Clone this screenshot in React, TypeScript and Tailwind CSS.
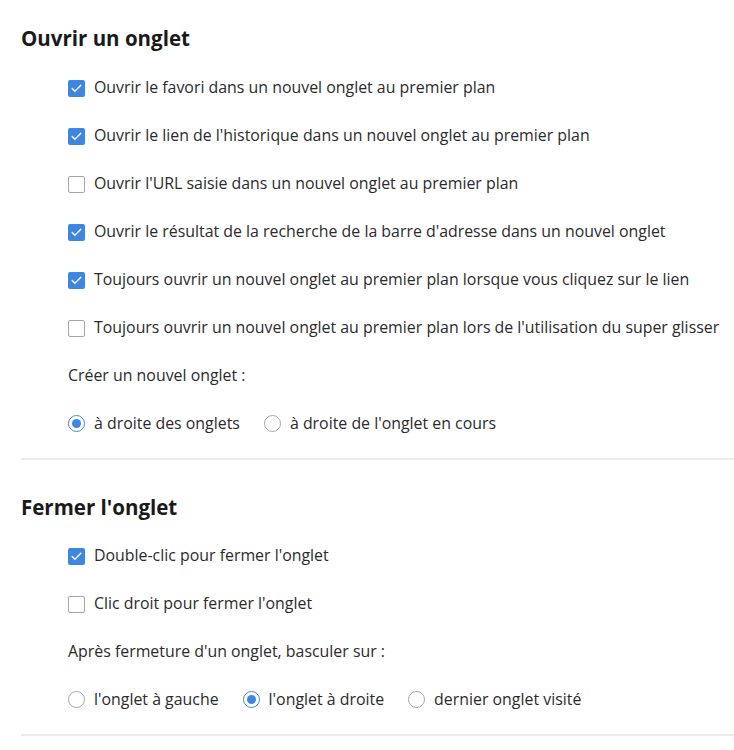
import { Check } from "lucide-react";

type Opt = { label: string; checked: boolean };

const openOptions: Opt[] = [
  { label: "Ouvrir le favori dans un nouvel onglet au premier plan", checked: true },
  { label: "Ouvrir le lien de l'historique dans un nouvel onglet au premier plan", checked: true },
  { label: "Ouvrir l'URL saisie dans un nouvel onglet au premier plan", checked: false },
  { label: "Ouvrir le résultat de la recherche de la barre d'adresse dans un nouvel onglet", checked: true },
  { label: "Toujours ouvrir un nouvel onglet au premier plan lorsque vous cliquez sur le lien", checked: true },
  { label: "Toujours ouvrir un nouvel onglet au premier plan lors de l'utilisation du super glisser", checked: false },
];

const closeOptions: Opt[] = [
  { label: "Double-clic pour fermer l'onglet", checked: true },
  { label: "Clic droit pour fermer l'onglet", checked: false },
];

const CheckRow = ({ label, checked }: Opt) => (
  <div className="flex h-12 items-center">
    {checked ? (
      <span className="flex h-[17px] w-[17px] items-center justify-center rounded-[2px] bg-[#3d87e0]">
        <Check size={13} strokeWidth={2.6} className="text-white" />
      </span>
    ) : (
      <span className="h-[17px] w-[17px] rounded-[2px] border border-[#a6a6a6] bg-white" />
    )}
    <span className="ml-[9px] text-[15.9px] text-[#2b2b2b]">{label}</span>
  </div>
);

const Radio = ({ label, checked }: Opt) => (
  <div className="flex items-center">
    {checked ? (
      <span className="flex h-[17px] w-[17px] items-center justify-center rounded-full border-[1.5px] border-[#3d87e0]">
        <span className="h-[9px] w-[9px] rounded-full bg-[#3d87e0]" />
      </span>
    ) : (
      <span className="h-[17px] w-[17px] rounded-full border border-[#a6a6a6]" />
    )}
    <span className="ml-[9px] text-[15.9px] text-[#2b2b2b]">{label}</span>
  </div>
);

export default function App() {
  return (
    <div className="min-h-[750px] bg-white pl-[21px] pt-6 font-['Open_Sans',sans-serif]">
      <h2 className="text-[20.5px] leading-7 font-bold text-[#1a1a1a]">Ouvrir un onglet</h2>
      <div className="mt-3 pl-[47px]">
        {openOptions.map((o) => (
          <CheckRow key={o.label} {...o} />
        ))}
        <div className="flex h-12 items-center text-[15.9px] text-[#2b2b2b]">Créer un nouvel onglet :</div>
        <div className="flex h-12 items-center gap-6">
          <Radio label="à droite des onglets" checked />
          <Radio label="à droite de l'onglet en cours" checked={false} />
        </div>
      </div>
      <div className="mt-[10px] h-[2px] bg-[#ececec]" />

      <h2 className="mt-[33px] text-[20.5px] leading-7 font-bold text-[#1a1a1a]">Fermer l'onglet</h2>
      <div className="mt-[11px] pl-[47px]">
        {closeOptions.map((o) => (
          <CheckRow key={o.label} {...o} />
        ))}
        <div className="flex h-12 items-center text-[15.9px] text-[#2b2b2b]">
          Après fermeture d'un onglet, basculer sur :
        </div>
        <div className="flex h-12 items-center gap-6">
          <Radio label="l'onglet à gauche" checked={false} />
          <Radio label="l'onglet à droite" checked />
          <Radio label="dernier onglet visité" checked={false} />
        </div>
      </div>
      <div className="mt-[10px] h-[2px] bg-[#ececec]" />
    </div>
  );
}
